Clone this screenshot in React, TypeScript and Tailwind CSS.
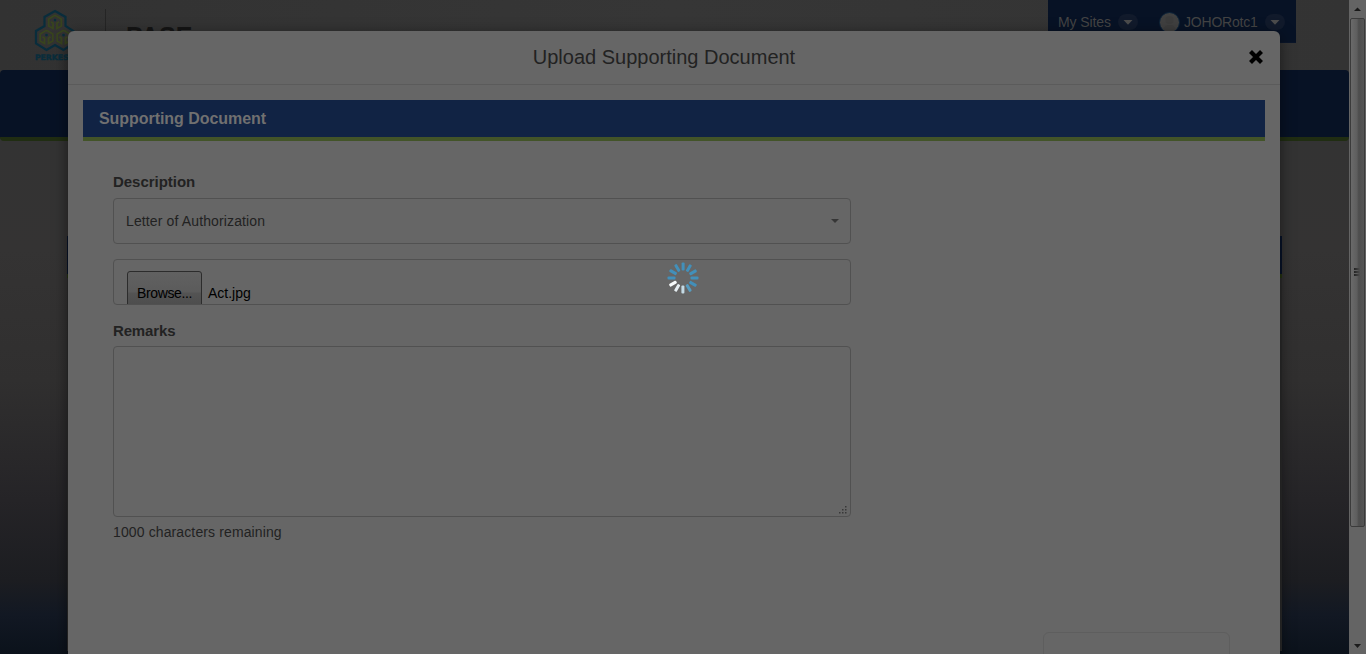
import React from "react";

function Hexagon({ cx, cy }: { cx: number; cy: number }) {
  return (
    <g transform={`translate(${cx} ${cy})`} fill="none" stroke="#38441e" strokeWidth="1.8">
      <path d="M0 -7.200 L6.300 -3.600 V3.400 L2 6 V0.800 L4 -0.800 M0 -7.200 L-6.300 -3.600 V3.400 L-2 6 V0.800 L-4 -0.800" />
      <circle r="1.3" cy="-2.4" fill="#092d3c" stroke="none" />
    </g>
  );
}

function Logo() {
  return (
    <svg className="block" width="42" height="54" viewBox="34 9 42 54">
      <path
        d="M55 11 L65.500 17 V26 L73.500 31 V43.500 L63.500 50 L55 45 L46.500 50 L36 43.500 V31 L44.500 26 V17 Z"
        fill="none"
        stroke="#092d3c"
        strokeWidth="2.200"
      />
      <Hexagon cx={55} cy={22.5} />
      <Hexagon cx={46.500} cy={37.500} />
      <Hexagon cx={63.500} cy={37.500} />
      <text x="35" y="59.600" fontSize="7.500" fontWeight="900" fontFamily="DejaVu Sans, sans-serif" fill="#092d3c" stroke="#092d3c" strokeWidth="0.400" textLength="40" lengthAdjust="spacingAndGlyphs">
        PERKESO
      </text>
    </svg>
  );
}

function Chevron() {
  return (
    <span className="flex h-4 w-5 shrink-0 items-center justify-center rounded-full bg-[#111a2b]">
      <svg width="10" height="5" viewBox="0 0 10 5"><path d="M0.500 0H9.500L5 4.700Z" fill="#4c4c4c" /></svg>
    </span>
  );
}

function PageBehind() {
  return (
    <div className="flex h-[654px] w-[1349px] flex-col bg-[linear-gradient(#363636_0px,#333_140px,#343333_250px,#302f2f_380px,#252427_500px,#1c1d21_580px,#121823_615px,#0b121b_654px)]">
      <header className="flex h-[70px] shrink-0 items-start bg-[linear-gradient(90deg,#323232,#363636_50%,#333)]">
        <div className="ml-[34px] mt-[9px] w-[71px]"><Logo /></div>
        <div className="mt-[9px] h-[53px] w-px bg-[#252525]" />
        <div className="ml-[20px] mt-[22px] w-[922px] text-[25px] leading-[29px] font-bold tracking-[0.100px] text-[#151515]">PASE</div>
        <div className="flex h-[43px] w-[248px] items-center border-b border-[#0a1529] bg-[#071225] pt-[2px] pl-[10px] text-sm text-[#444]">
          <span className="w-[60px] shrink-0 whitespace-nowrap tracking-[-0.100px]">My Sites</span>
          <Chevron />
          <span className="ml-[21px] mr-[4px] flex h-[21px] w-[21px] shrink-0 items-center justify-center overflow-hidden rounded-full border border-[#0b2238] bg-[#404040]">
            <svg width="17" height="19" viewBox="0 0 17 19" fill="#3c3c3c"><circle cx="8.500" cy="7" r="4" /><path d="M2 19C2 14 4 12 8.500 12S15 14 15 19Z" /></svg>
          </span>
          <span className="w-[81px] shrink-0 tracking-[-0.200px]">JOHORotc1</span>
          <Chevron />
        </div>
      </header>
      <nav className="h-[71px] shrink-0 rounded-[4px] border-b-4 border-[#202d12] bg-[#071225]" />
      <section className="mt-[95px] ml-[67px] h-[415px] w-[1215px] shrink-0 bg-[#2c2c2c]">
        <div className="h-[42px] border-b-4 border-[#253411] bg-[#071329]" />
      </section>
    </div>
  );
}

function Scrollbar() {
  return (
    <aside className="flex h-[654px] w-[17px] flex-col items-center bg-[#646464]">
      <div className="flex h-[18px] items-center">
        <svg width="7" height="5" viewBox="0 0 7 5"><path d="M3.500 0.500L7 4H0Z" fill="#191919" /></svg>
      </div>
      <div className="flex h-[509px] w-[15px] items-center justify-center rounded-[2px] border border-[#3b3b3b] bg-[linear-gradient(90deg,#6a6a6a,#5e5e5e_45%,#4d4d4d_60%,#555_100%)]">
        <div className="mb-[2px] flex w-[7px] flex-col gap-px">
          <div className="h-[2px] bg-[linear-gradient(90deg,#222,#555)]" />
          <div className="h-[2px] bg-[linear-gradient(90deg,#222,#555)]" />
          <div className="h-[2px] bg-[linear-gradient(90deg,#222,#555)]" />
        </div>
      </div>
      <div className="mt-[117px]">
        <svg className="block" width="7" height="4" viewBox="0 0 7 4"><path d="M0 0H7L3.500 4Z" fill="#1b1b1b" /></svg>
      </div>
    </aside>
  );
}

function UploadDialog() {
  return (
    <div role="dialog" className="absolute top-[31px] left-[68px] h-[640px] w-[1212px] rounded-t-[6px] bg-[#666] shadow-[0_4px_15px_rgba(0,0,0,0.5)]">
      <div className="flex h-[54px] items-center border-b border-[#5b5b5b]">
        <h1 className="w-[1180px] pb-px pl-[12px] text-center text-xl text-[#222]">Upload Supporting Document</h1>
        <button aria-label="Close" className="mb-[2px] flex w-4 items-center justify-center">
          <svg width="16" height="16" viewBox="0 0 16 16"><path d="M2.500 2.500L13.500 13.500M13.500 2.500L2.500 13.500" stroke="#000" strokeWidth="4.200" /></svg>
        </button>
      </div>
      <div className="px-[15px] pt-[15px]">
        <h2 className="h-[41px] border-b-4 border-[#435428] bg-[#112344] pl-[16px] text-base leading-[37px] font-bold tracking-[-0.050px] text-[#707070]">Supporting Document</h2>
        <form className="flex w-[768px] flex-col pl-[30px] pt-[31px] text-[#222]">
          <label className="h-[26px] text-[15px] leading-[20px] font-bold tracking-[-0.030px]">Description</label>
          <div className="flex h-[46px] items-center justify-between rounded-[4px] border border-[#515151] px-[12px] text-sm text-[#222]">
            <span className="tracking-[0.130px]">Letter of Authorization</span>
            <svg className="mr-[-1px]" width="8" height="4" viewBox="0 0 8 4"><path d="M0 0H8L4 4Z" fill="#363636" /></svg>
          </div>
          <div className="mt-[15px] flex h-[46px] items-start overflow-hidden rounded-[4px] border border-[#515151] pt-[11px] pl-[13px] text-sm text-black">
            <div className="h-[45px] w-[75px] shrink-0 rounded-[3px] border border-[#2c2c2c] bg-[linear-gradient(#616161_0px,#5b5b5b_20px,#535353_21px,#484848_44px)] text-center leading-[43px] tracking-[-0.350px]">Browse...</div>
            <span className="ml-[6px] leading-[45px]">Act.jpg</span>
          </div>
          <label className="mt-[16px] h-[25px] text-[15px] leading-[20px] font-bold tracking-[-0.150px]">Remarks</label>
          <div className="flex h-[171px] items-end justify-end rounded-[4px] border border-[#515151] p-[2px]">
            <svg width="9" height="8" viewBox="0 0 9 8" fill="#383838"><path d="M6 0h1.500v1.500H6zM3 3h1.500v1.500H3zM6 3h1.500v1.500H6zM0 6h1.500v1.500H0zM3 6h1.500v1.500H3zM6 6h1.500v1.500H6z" /></svg>
          </div>
          <p className="mt-[5px] text-sm leading-[20px] tracking-[0.120px]">1000 characters remaining</p>
        </form>
        <div className="mt-[90px] mr-[35px] ml-auto h-[46px] w-[187px] rounded-[6px] border border-[#5e5e5e]" />
      </div>
    </div>
  );
}

function Spinner() {
  const shades = ["#4290ba", "#4290ba", "#4290ba", "#4290ba", "#428fb9", "#579cc0", "#c4dae5", "#e5edf1", "#f7fafb", "#4290ba", "#4290ba", "#4290ba"];
  return (
    <svg className="absolute top-[262px] left-[667px]" width="32" height="32" viewBox="0 0 32 32">
      {shades.map((fill, i) => (
        <rect key={i} x="14.600" y="0.500" width="3" height="8" rx="1" fill={fill} transform={`rotate(${i * 30} 16 16)`} />
      ))}
    </svg>
  );
}

export default function App() {
  return (
    <main className="relative flex h-[654px] w-[1366px] overflow-hidden font-['Liberation_Sans',Arial,sans-serif]">
      <PageBehind />
      <UploadDialog />
      <Scrollbar />
      <Spinner />
    </main>
  );
}
